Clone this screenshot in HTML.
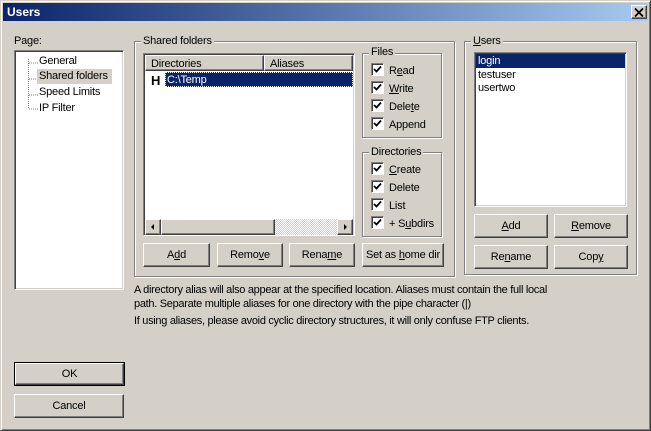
<!DOCTYPE html>
<html><head><meta charset="utf-8"><style>
*{box-sizing:border-box;margin:0;padding:0}
body{width:651px;height:431px;background:#d4d0c8;font-family:"Liberation Sans",sans-serif;font-size:11px;color:#000;position:relative;overflow:hidden;letter-spacing:-0.2px}
.a{position:absolute}
.win{left:0;top:0;width:651px;height:431px;border:1px solid;border-color:#d4d0c8 #404040 #404040 #d4d0c8;box-shadow:inset 1px 1px 0 #fff,inset -1px -1px 0 #808080}
.title{left:3px;top:3px;width:645px;height:18px;background:linear-gradient(90deg,#0a246a,#a6caf0);color:#fff;font-weight:bold;font-size:12px;padding:2px 4px;letter-spacing:0}
.sunk{background:#fff;border:1px solid;border-color:#808080 #fff #fff #808080;box-shadow:inset 1px 1px 0 #404040,inset -1px -1px 0 #d4d0c8}
.grp{border:1px solid #808080;box-shadow:1px 1px 0 #fff,inset 1px 1px 0 #fff}
.lbl{background:#d4d0c8;padding:0 2px}
.btn{border:1px solid;border-color:#fff #404040 #404040 #fff;box-shadow:inset -1px -1px 0 #808080;text-align:center;background:#d4d0c8}
.cb{width:13px;height:13px;background:#fff;border:1px solid;border-color:#808080 #fff #fff #808080;box-shadow:inset 1px 1px 0 #404040}
.cb svg{position:absolute;left:1px;top:1px}
u{text-decoration:underline}
</style></head><body>
<div class="a win"></div>
<div class="a title">Users</div>
<div class="a btn" style="left:631px;top:5px;width:16px;height:14px;line-height:12px"><svg width="10" height="9" viewBox="0 0 10 9" style="margin-top:2px"><path d="M1 0.5L9 8.5M9 0.5L1 8.5" stroke="#000" stroke-width="1.8"/></svg></div>

<div class="a" style="left:14px;top:35px">Page:</div>
<div class="a sunk" style="left:14px;top:50px;width:110px;height:240px"></div>
<svg class="a" style="left:28px;top:59px" width="12" height="55"><path d="M0.5 0V50M1 4H10M1 20H10M1 36H10M1 50H10" stroke="#808080" stroke-dasharray="1 1"/></svg>
<div class="a" style="left:39px;top:55px">General</div>
<div class="a" style="left:37px;top:69px;width:75px;height:15px;background:#d4d0c8"></div>
<div class="a" style="left:39px;top:70px">Shared folders</div>
<div class="a" style="left:39px;top:86px">Speed Limits</div>
<div class="a" style="left:39px;top:102px">IP Filter</div>

<div class="a grp" style="left:134px;top:41px;width:321px;height:236px"></div>
<div class="a lbl" style="left:141px;top:35px">Shared folders</div>
<div class="a sunk" style="left:143px;top:53px;width:212px;height:183px"></div>
<div class="a btn" style="left:145px;top:55px;width:119px;height:16px;padding:2px 5px;text-align:left">Directories</div>
<div class="a btn" style="left:264px;top:55px;width:89px;height:16px;padding:2px 5px;text-align:left">Aliases</div>
<div class="a" style="left:151px;top:73px;font-weight:bold;font-size:13px">H</div>
<div class="a" style="left:165px;top:72px;width:188px;height:15px;background:#0a246a;color:#fff;padding:2px 2px;outline:1px dotted #fff;outline-offset:-1px">C:\Temp</div>
<div class="a" style="left:145px;top:219px;width:208px;height:16px;background:repeating-conic-gradient(#d4d0c8 0 25%,#fff 0 50%) 0 0/2px 2px"></div>
<div class="a btn" style="left:145px;top:219px;width:16px;height:16px"><svg width="14" height="14"><path d="M5 7L8 4V10Z" fill="#000"/></svg></div>
<div class="a btn" style="left:161px;top:219px;width:114px;height:16px"></div>
<div class="a btn" style="left:337px;top:219px;width:16px;height:16px"><svg width="14" height="14"><path d="M9 7L6 4V10Z" fill="#000"/></svg></div>

<div class="a btn" style="left:143px;top:243px;width:67px;height:24px;line-height:23px">A<u>d</u>d</div>
<div class="a btn" style="left:217px;top:243px;width:66px;height:24px;line-height:23px">Remo<u>v</u>e</div>
<div class="a btn" style="left:289px;top:243px;width:66px;height:24px;line-height:23px">Rena<u>m</u>e</div>
<div class="a btn" style="left:362px;top:243px;width:82px;height:24px;line-height:23px">Set as <u>h</u>ome dir</div>

<div class="a grp" style="left:362px;top:53px;width:80px;height:85px"></div>
<div class="a lbl" style="left:369px;top:46px">Files</div>
<div class="a grp" style="left:362px;top:152px;width:80px;height:85px"></div>
<div class="a lbl" style="left:369px;top:146px">Directories</div>

<div class="a grp" style="left:464px;top:41px;width:173px;height:234px"></div>
<div class="a lbl" style="left:471px;top:35px"><u>U</u>sers</div>
<div class="a sunk" style="left:474px;top:52px;width:153px;height:155px"></div>
<div class="a" style="left:476px;top:54px;width:149px;height:14px;background:#0a246a;color:#fff;padding:1px 2px 0">login</div>
<div class="a" style="left:478px;top:69px">testuser</div>
<div class="a" style="left:478px;top:82px">usertwo</div>
<div class="a btn" style="left:474px;top:214px;width:74px;height:24px;line-height:23px"><u>A</u>dd</div>
<div class="a btn" style="left:554px;top:214px;width:74px;height:24px;line-height:23px"><u>R</u>emove</div>
<div class="a btn" style="left:474px;top:245px;width:74px;height:24px;line-height:23px">Re<u>n</u>ame</div>
<div class="a btn" style="left:554px;top:245px;width:74px;height:24px;line-height:23px">Cop<u>y</u></div>

<div class="a" style="left:134px;top:283px;line-height:14px;letter-spacing:-0.3px">A directory alias will also appear at the specified location. Aliases must contain the full local<br>path. Separate multiple aliases for one directory with the pipe character (|)</div>
<div class="a" style="left:134px;top:315px;letter-spacing:-0.3px">If using aliases, please avoid cyclic directory structures, it will only confuse FTP clients.</div>

<div class="a" style="left:14px;top:362px;width:111px;height:24px;border:1px solid #000"></div>
<div class="a btn" style="left:15px;top:363px;width:109px;height:22px;line-height:21px">OK</div>
<div class="a btn" style="left:14px;top:394px;width:110px;height:24px;line-height:23px">Cancel</div>

<div id="cbs"></div>
<script>
var rows=[[64,'R<u>e</u>ad'],[82,'<u>W</u>rite'],[100,'Dele<u>t</u>e'],[118,'Append'],[163,'<u>C</u>reate'],[181,'Delete'],[199,'List'],[217,'+ S<u>u</u>bdirs']];
var h='';rows.forEach(function(r){h+='<div class="a cb" style="left:371px;top:'+(r[0]-1)+'px"><svg width="9" height="9"><path d="M1 4L3.5 6.5L8 1.5" stroke="#000" stroke-width="1.8" fill="none"/></svg></div><div class="a" style="left:389px;top:'+(r[0]+1)+'px">'+r[1]+'</div>';});
document.getElementById('cbs').innerHTML=h;
</script>
</body></html>
